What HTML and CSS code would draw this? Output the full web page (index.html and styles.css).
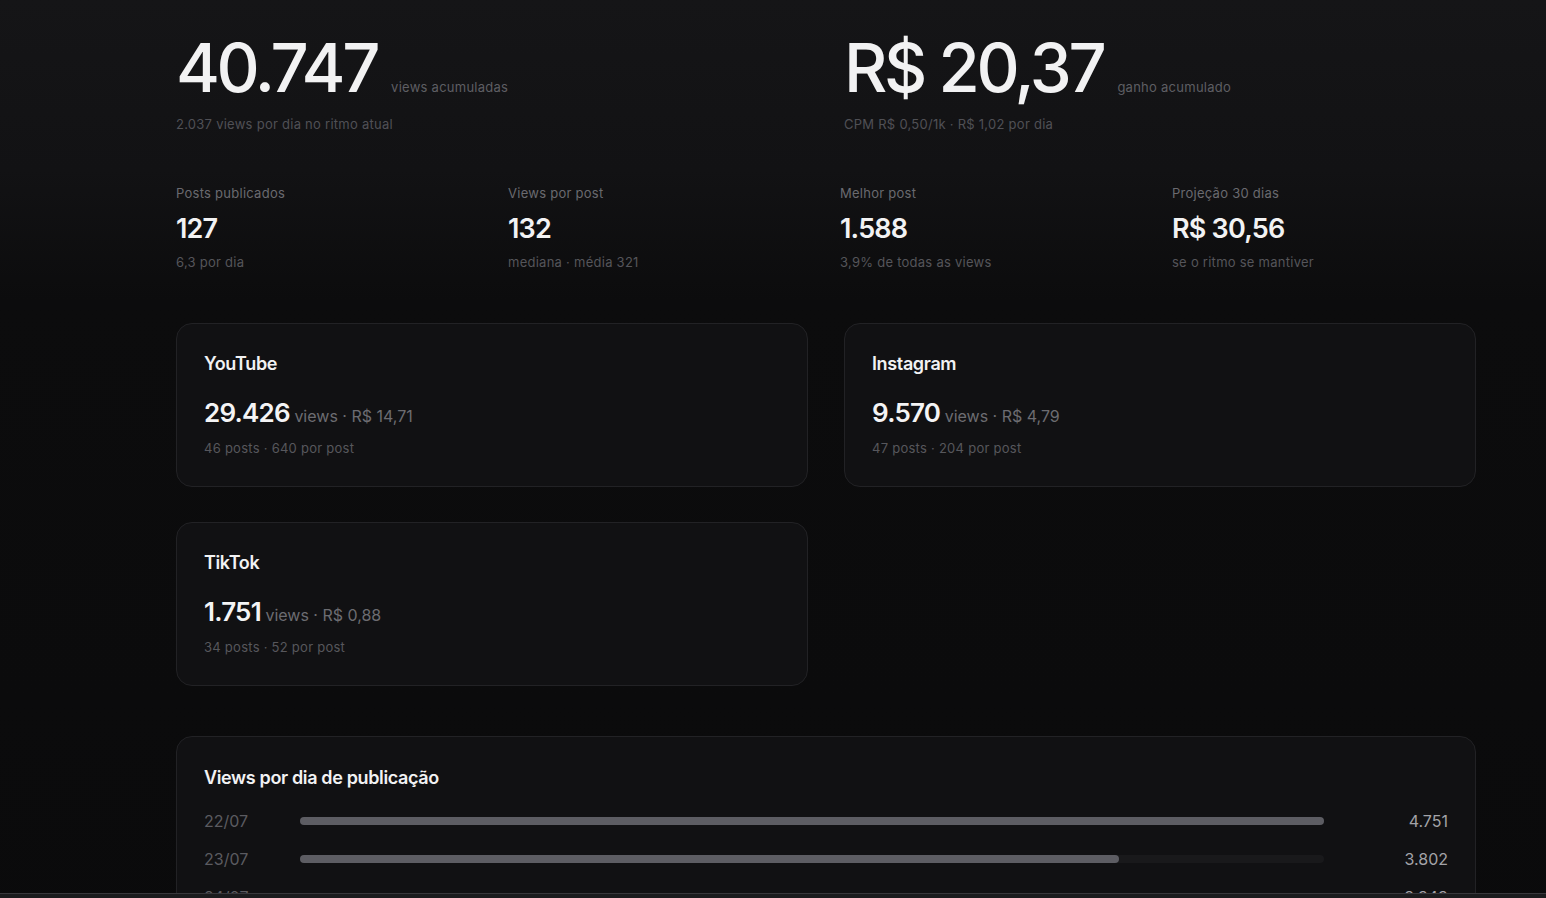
FILE: index.html
```html
<!DOCTYPE html>
<html lang="pt-BR">
<head>
    <meta charset="UTF-8">
    <meta name="viewport" content="width=device-width, initial-scale=1.0">
    <title>Painel de views</title>
    <link rel="stylesheet" href="styles.css">
</head>
<body>
    <main class="page">
        <section class="hero">
            <div class="hero-item">
                <div class="hero-main">
                    <span class="hero-value">40.747</span>
                    <span class="hero-unit">views acumuladas</span>
                </div>
                <div class="hero-sub">2.037 views por dia no ritmo atual</div>
            </div>
            <div class="hero-item">
                <div class="hero-main">
                    <span class="hero-value">R$ 20,37</span>
                    <span class="hero-unit">ganho acumulado</span>
                </div>
                <div class="hero-sub">CPM R$ 0,50/1k · R$ 1,02 por dia</div>
            </div>
        </section>

        <section class="stats">
            <div class="stat">
                <div class="stat-label">Posts publicados</div>
                <div class="stat-value">127</div>
                <div class="stat-sub">6,3 por dia</div>
            </div>
            <div class="stat">
                <div class="stat-label">Views por post</div>
                <div class="stat-value">132</div>
                <div class="stat-sub">mediana · média 321</div>
            </div>
            <div class="stat">
                <div class="stat-label">Melhor post</div>
                <div class="stat-value">1.588</div>
                <div class="stat-sub">3,9% de todas as views</div>
            </div>
            <div class="stat">
                <div class="stat-label">Projeção 30 dias</div>
                <div class="stat-value">R$ 30,56</div>
                <div class="stat-sub">se o ritmo se mantiver</div>
            </div>
        </section>

        <section class="platforms">
            <div class="card">
                <div class="card-title">YouTube</div>
                <div class="card-main"><span class="card-value">29.426</span> views · R$ 14,71</div>
                <div class="card-sub">46 posts · 640 por post</div>
            </div>
            <div class="card">
                <div class="card-title">Instagram</div>
                <div class="card-main"><span class="card-value">9.570</span> views · R$ 4,79</div>
                <div class="card-sub">47 posts · 204 por post</div>
            </div>
            <div class="card">
                <div class="card-title">TikTok</div>
                <div class="card-main"><span class="card-value">1.751</span> views · R$ 0,88</div>
                <div class="card-sub">34 posts · 52 por post</div>
            </div>
        </section>

        <section class="card chart">
            <div class="card-title">Views por dia de publicação</div>
            <div class="rows">
                <div class="row">
                    <span class="row-label">22/07</span>
                    <div class="track"><div class="fill" style="width: 100%"></div></div>
                    <span class="row-value">4.751</span>
                </div>
                <div class="row">
                    <span class="row-label">23/07</span>
                    <div class="track"><div class="fill" style="width: 80%"></div></div>
                    <span class="row-value">3.802</span>
                </div>
                <div class="row">
                    <span class="row-label">24/07</span>
                    <div class="track"><div class="fill" style="width: 70.4%"></div></div>
                    <span class="row-value">3.343</span>
                </div>
                <div class="row">
                    <span class="row-label">25/07</span>
                    <div class="track"><div class="fill" style="width: 58.2%"></div></div>
                    <span class="row-value">2.766</span>
                </div>
                <div class="row">
                    <span class="row-label">26/07</span>
                    <div class="track"><div class="fill" style="width: 44.9%"></div></div>
                    <span class="row-value">2.134</span>
                </div>
            </div>
        </section>
    </main>
    <div class="bottom-bar"></div>
</body>
</html>
```

FILE: styles.css
```css
body {
    margin: 0;
    font-family: Inter, "Noto Sans", sans-serif;
    background: linear-gradient(180deg, #151517 0px, #121214 170px, #0c0c0d 300px, #0a0a0b 100%);
    background-color: #0a0a0b;
    color: #f2f2f3;
    min-height: 100vh;
}
.page {
    width: 1300px;
    margin-left: 176px;
    padding-bottom: 80px;
}
.hero {
    display: grid;
    grid-template-columns: 1fr 1fr;
    column-gap: 36px;
    padding-top: 28px;
}
.hero-main {
    display: flex;
    align-items: baseline;
    gap: 14px;
}
.hero-value {
    font-size: 67px;
    font-weight: 500;
    letter-spacing: -0.05em;
    line-height: 80px;
}
.hero-unit {
    font-size: 13px;
    letter-spacing: 0.02em;
    color: #5e5e63;
}
.hero-sub {
    margin-top: 8px;
    font-size: 13px;
    letter-spacing: 0.02em;
    color: #505055;
}
.stats {
    display: grid;
    grid-template-columns: repeat(4, 1fr);
    column-gap: 28px;
    margin-top: 52px;
}
.stat-label {
    font-size: 13px;
    line-height: 18px;
    letter-spacing: 0.02em;
    color: #6a6a6f;
}
.stat-value {
    font-size: 27px;
    font-weight: 600;
    letter-spacing: -0.03em;
    line-height: 32px;
    margin-top: 11px;
}
.stat-sub {
    font-size: 13px;
    line-height: 18px;
    letter-spacing: 0.02em;
    margin-top: 8px;
    color: #55555a;
}
.platforms {
    display: grid;
    grid-template-columns: 1fr 1fr;
    gap: 35px 36px;
    margin-top: 52px;
}
.card {
    background-color: #111113;
    border: 1px solid #222225;
    border-radius: 16px;
    padding: 28px 27px 29px;
}
.card-title {
    font-size: 18px;
    font-weight: 600;
    letter-spacing: -0.02em;
    line-height: 24px;
}
.card-main {
    margin-top: 21px;
    font-size: 16px;
    line-height: 32px;
    color: #6c6c71;
}
.card-value {
    font-size: 26px;
    font-weight: 600;
    letter-spacing: -0.03em;
    color: #f4f4f5;
}
.card-sub {
    margin-top: 7px;
    font-size: 13px;
    line-height: 18px;
    letter-spacing: 0.02em;
    color: #57575c;
}
.chart {
    margin-top: 50px;
    padding-top: 29px;
}
.rows {
    margin-top: 12px;
}
.row {
    display: flex;
    align-items: center;
    height: 38px;
}
.row-label {
    width: 96px;
    font-size: 16px;
    color: #5b5b60;
}
.track {
    flex: 1;
    height: 8px;
    border-radius: 4px;
    background-color: #19191b;
}
.fill {
    height: 100%;
    border-radius: 4px;
    background-color: #5d5d63;
}
.row-value {
    width: 124px;
    text-align: right;
    font-size: 16px;
    color: #a3a3a8;
}
.bottom-bar {
    position: fixed;
    left: 0;
    right: 0;
    bottom: 0;
    height: 4px;
    border-top: 1px solid #38383c;
    background-color: #1b1c1e;
}
```
